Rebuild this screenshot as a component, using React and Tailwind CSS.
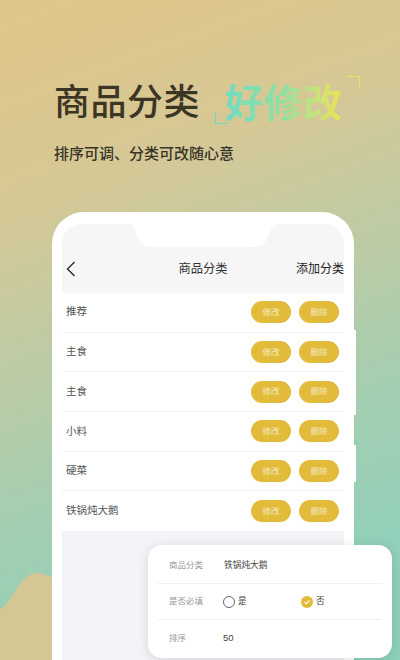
import React from 'react';

const rows = ['推荐', '主食', '主食', '小料', '硬菜', '铁锅炖大鹅'];

const Pill = ({ label }) => (
  <button className="w-10 h-[22px] rounded-full bg-[#e3bb3a] text-white/65 text-[8.5px] leading-none">{label}</button>
);

const FormRow = ({ label, children, border }) => (
  <div className={`h-9 flex items-center ${border ? 'border-b border-[#f0f0f0]' : ''}`}>
    <span className="w-[66px] pl-[11px] text-[8.5px] text-[#999] shrink-0">{label}</span>
    {children}
  </div>
);

export default function App() {
  return (
    <div
      className="relative w-[400px] h-[660px] overflow-hidden bg-[linear-gradient(160deg,#e0c588_0%,#d5c896_27%,#b3ccaa_54%,#a2ceb1_67%,#92d0b9_85%,#8cd1bc_100%)] font-['Liberation_Sans','Noto_Sans_CJK_SC',sans-serif]"
    >
      <svg className="absolute left-0 top-[560px]" width="60" height="100" viewBox="0 0 60 100">
        <path d="M0 50 C12 40 20 18 32 14 C40 11 48 15 60 22 L60 100 L0 100 Z" fill="#d5c793" />
      </svg>

      <div className="relative pt-[82px] pl-[54px]">
        <div className="flex items-center h-[42px]">
          <h1 className="text-[36px] leading-none font-medium tracking-[0.5px] text-[#3b3524] whitespace-nowrap">商品分类</h1>
          <div className="relative ml-[25px]">
            <span className="block text-[39px] leading-none font-bold bg-gradient-to-r from-[#6fdcc2] via-[#8fe0a0] to-[#ece352] bg-clip-text text-transparent whitespace-nowrap">好修改</span>
            <span className="absolute left-[-10px] bottom-[-1px] w-[13px] h-3 border-l-[1.5px] border-b-[1.5px] border-[#6fdcc2]" />
            <span className="absolute right-[-18px] top-[-8px] w-[13px] h-3 border-t-[1.5px] border-r-[1.5px] border-[#ece352]" />
          </div>
        </div>
        <p className="mt-[19px] text-[15px] leading-[22px] font-medium text-[#37352a]">排序可调、分类可改随心意</p>
      </div>

      <div className="relative mt-[47px] ml-[52px] w-[302px] h-[448px] rounded-t-[32px] bg-white px-[10px] pt-[12px]">
        <div className="absolute right-[-2px] top-[118px] w-[2px] h-[85px] bg-white" />
        <div className="absolute right-[-2px] top-[233px] w-[2px] h-[37px] bg-white" />
        <div className="relative h-full rounded-t-[20px] overflow-hidden bg-[#f4f4f8]">
          <div className="h-[69px] pt-[21px] flex items-center bg-[#f6f6f6]">
            <svg className="ml-[3px]" width="12" height="18" viewBox="0 0 12 18" fill="none">
              <path d="M9.5 2 L2.5 9 L9.5 16" stroke="#222" strokeWidth="1.3" />
            </svg>
            <span className="absolute left-0 right-0 text-center text-[12.3px] text-[#333]">商品分类</span>
            <span className="ml-auto text-[12px] text-[#222]">添加分类</span>
          </div>
          <svg className="absolute left-[65px] top-0" width="152" height="24" viewBox="0 0 152 24">
            <path d="M0 0 C6 0 8 5 10 11 C13 19 17 23 25 23 L127 23 C135 23 139 19 142 11 C144 5 146 0 152 0 Z" fill="#fff" />
          </svg>
          <div className="bg-white">
            {rows.map((name, i) => (
              <div key={i} className="h-[39.7px] flex items-center pl-[4px] pr-[5px] border-b border-[#f1f1f1] last:border-b-0">
                <span className="text-[10.5px] text-[#555]">{name}</span>
                <div className="ml-auto flex gap-2">
                  <Pill label="修改" />
                  <Pill label="删除" />
                </div>
              </div>
            ))}
          </div>
        </div>
      </div>

      <div className="absolute left-[148px] top-[545px] w-[244px] h-[113px] rounded-[14px] bg-white shadow-[0_2px_12px_rgba(0,0,0,0.12)] px-[10px] pt-[3px]">
        <FormRow label="商品分类" border>
          <span className="text-[8.7px] text-[#444]">铁锅炖大鹅</span>
        </FormRow>
        <FormRow label="是否必填" border>
          <span className="w-3 h-3 rounded-full border border-[#666] shrink-0 ml-[-1px]" />
          <span className="ml-[3px] w-[63px] text-[8.7px] text-[#444]">是</span>
          <span className="w-3 h-3 rounded-full bg-[#e3bb3a] flex items-center justify-center shrink-0">
            <svg width="8" height="8" viewBox="0 0 8 8" fill="none">
              <path d="M1.5 4 L3.3 5.7 L6.5 2.3" stroke="#fff" strokeWidth="1.1" />
            </svg>
          </span>
          <span className="ml-[3px] text-[8.7px] text-[#444]">否</span>
        </FormRow>
        <FormRow label="排序">
          <span className="text-[9.5px] font-medium text-[#444] ml-[-1px]">50</span>
        </FormRow>
      </div>
    </div>
  );
}
